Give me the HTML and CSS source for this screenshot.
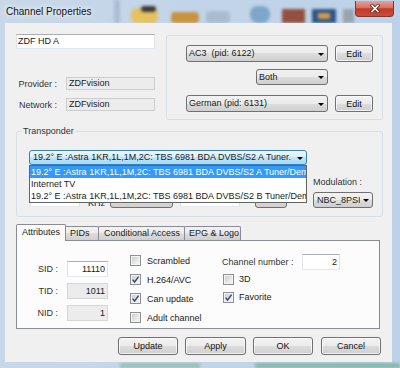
FILE: index.html
```html
<!DOCTYPE html>
<html>
<head>
<meta charset="utf-8">
<link rel="stylesheet" href="styles.css">
</head>
<body>
<div class="window">
  <div class="desk">
    <div class="blob b-band"></div>
    <div class="blob b-yel"></div>
    <div class="blob b-hat"></div>
    <div class="blob b-org"></div>
    <div class="blob b-lb"></div>
    <div class="blob b-blue"></div>
    <div class="blob b-brown"></div>
    <div class="blob b-navy"></div>
    <div class="blob b-navy2"></div>
    <div class="blob b-gray"></div>
    <div class="blob b-g1"></div>
    <div class="blob b-g2"></div>
  </div>
  <div class="titlebar">
    <span class="title">Channel Properties</span>
    <div class="close">
      <svg width="10" height="9" viewBox="0 0 10 9"><path d="M2 1.5 L8 7.5 M8 1.5 L2 7.5" stroke="#5a2a26" stroke-width="3.2" stroke-linecap="square"/><path d="M2 1.5 L8 7.5 M8 1.5 L2 7.5" stroke="#fff" stroke-width="1.6" stroke-linecap="square"/></svg>
    </div>
  </div>
  <div class="client">
    <div class="top">
      <div class="leftcol">
        <div class="tb name">ZDF HD A</div>
        <div class="inforow first"><span class="lbl">Provider :</span><div class="ro">ZDFvision</div></div>
        <div class="inforow"><span class="lbl">Network :</span><div class="ro">ZDFvision</div></div>
      </div>
      <div class="group audio">
        <div class="arow"><div class="combo wide"><span class="ctext">AC3&nbsp; (pid: 6122)</span><span class="arr"></span></div><div class="btn edit">Edit</div></div>
        <div class="arow r2"><div class="combo both"><span class="ctext">Both</span><span class="arr"></span></div></div>
        <div class="arow r3"><div class="combo wide"><span class="ctext">German (pid: 6131)</span><span class="arr"></span></div><div class="btn edit">Edit</div></div>
      </div>
    </div>
    <div class="group transp">
      <span class="legend">Transponder</span>
      <div class="tcombo-wrap">
        <div class="combo focus"><span class="ctext">19.2° E :Astra 1KR,1L,1M,2C: TBS 6981 BDA DVBS/S2 A Tuner.</span><span class="arr"></span></div>
        <div class="droplist">
          <div class="item sel">19.2° E :Astra 1KR,1L,1M,2C: TBS 6981 BDA DVBS/S2 A Tuner/Demod</div>
          <div class="item">Internet TV</div>
          <div class="item">19.2° E :Astra 1KR,1L,1M,2C: TBS 6981 BDA DVBS/S2 B Tuner/Demod</div>
        </div>
      </div>
      <div class="trow">
        <div class="tb freq"></div>
        <span class="khz">KHz</span>
        <div class="combo pol"><span class="ctext"></span><span class="arr"></span></div>
        <div class="tb sr"></div>
        <div class="combo fec"><span class="ctext"></span><span class="arr"></span></div>
        <div class="modcol">
          <span class="modlbl">Modulation :</span>
          <div class="combo mod"><span class="ctext">NBC_8PSI</span><span class="arr"></span></div>
        </div>
      </div>
    </div>
    <div class="tabs">
      <div class="tab sel t1">Attributes</div>
      <div class="tab t2">PIDs</div>
      <div class="tab t3">Conditional Access</div>
      <div class="tab t4">EPG &amp; Logo</div>
    </div>
    <div class="panel">
      <div class="col1">
        <div class="idrow"><span class="idlbl">SID :</span><div class="tb num">11110</div></div>
        <div class="idrow"><span class="idlbl">TID :</span><div class="tb num dis">1011</div></div>
        <div class="idrow"><span class="idlbl">NID :</span><div class="tb num dis">1</div></div>
      </div>
      <div class="col2">
        <div class="chk"><span class="cb"></span><span>Scrambled</span></div>
        <div class="chk"><span class="cb"><svg width="9" height="9" viewBox="0 0 9 9"><path d="M1.6 4.6 L3.6 7 L7.6 1.6" fill="none" stroke="#34497e" stroke-width="1.4"/></svg></span><span>H.264/AVC</span></div>
        <div class="chk"><span class="cb"><svg width="9" height="9" viewBox="0 0 9 9"><path d="M1.6 4.6 L3.6 7 L7.6 1.6" fill="none" stroke="#34497e" stroke-width="1.4"/></svg></span><span>Can update</span></div>
        <div class="chk"><span class="cb"></span><span>Adult channel</span></div>
      </div>
      <div class="col3">
        <div class="chrow"><span class="chlbl">Channel number :</span><div class="tb num chnum">2</div></div>
        <div class="chk c3"><span class="cb"></span><span>3D</span></div>
        <div class="chk c3"><span class="cb"><svg width="9" height="9" viewBox="0 0 9 9"><path d="M1.6 4.6 L3.6 7 L7.6 1.6" fill="none" stroke="#34497e" stroke-width="1.4"/></svg></span><span>Favorite</span></div>
      </div>
    </div>
    <div class="buttons">
      <div class="btn b-upd">Update</div>
      <div class="btn b-apply">Apply</div>
      <div class="btn b-ok">OK</div>
      <div class="btn b-cancel">Cancel</div>
    </div>
  </div>
</div>
</body>
</html>
```
FILE: styles.css
```css
* { box-sizing: border-box; }
html, body { margin: 0; padding: 0; }
body {
  width: 400px; height: 368px; overflow: hidden;
  font-family: "Liberation Sans", Arial, sans-serif;
  font-size: 9px; color: #1a1a1a;
}
.window {
  position: relative;
  width: 400px; height: 368px;
  background: linear-gradient(90deg, #c9d8e8 0%, #c3d5e8 40%, #bdd2e8 100%);
  padding: 0 8px 6px 5px;
  display: flex; flex-direction: column;
  overflow: hidden;
}
.desk { position: absolute; left: 0; top: 0; width: 400px; height: 368px; }
.blob { position: absolute; filter: blur(1.5px); }
.b-band { left: 114px; top: 0; width: 6px; height: 23px; background: #a9bed3; }
.b-yel { left: 131px; top: 8px; width: 27px; height: 15px; background: #e6c25e; border-radius: 6px; }
.b-hat { left: 141px; top: 6px; width: 15px; height: 6px; background: #3a3a3a; border-radius: 3px; }
.b-org { left: 171px; top: 12px; width: 28px; height: 11px; background: #c8923f; border-radius: 4px; }
.b-lb { left: 206px; top: 11px; width: 24px; height: 12px; background: #a9bccf; border-radius: 4px; }
.b-blue { left: 250px; top: 6px; width: 20px; height: 17px; background: #7ea6c9; border-radius: 8px; }
.b-brown { left: 282px; top: 9px; width: 23px; height: 14px; background: #934f40; }
.b-navy { left: 312px; top: 9px; width: 24px; height: 14px; background: #2c5686; }
.b-navy2 { left: 318px; top: 13px; width: 12px; height: 6px; background: #d79a4a; }
.b-gray { left: 343px; top: 9px; width: 11px; height: 14px; background: #98a4ae; }
.b-g1 { left: 120px; top: 363px; width: 80px; height: 5px; background: #7fb49c; opacity: .6; }
.b-g2 { left: 255px; top: 363px; width: 145px; height: 5px; background: #62a482; opacity: .6; }

.titlebar { position: relative; height: 23px; display: flex; align-items: flex-start; }
.title {
  font-family: "Liberation Sans", Arial, sans-serif;
  font-size: 10px; line-height: 12px;
  margin: 6px 0 0 1px; color: #111;
  text-shadow: 0 0 4px #fff, 0 0 7px rgba(255,255,255,.9);
}
.close {
  margin-left: auto; margin-right: -2px; margin-top: 1px;
  width: 39px; height: 16px;
  border: 1px solid #7a3a33; border-top: none;
  border-radius: 0 0 4px 4px;
  background: linear-gradient(#e4a39a 0%, #d6705f 45%, #c23b2b 52%, #cf4a36 100%);
  display: flex; align-items: center; justify-content: center;
}

.client {
  position: relative;
  width: 387px; height: 339px;
  background: #f0f0f0;
  padding-left: 11px;
}

.tb {
  border: 1px solid;
  border-color: #abadb3 #e2e3ea #e3e9ef #e2e3ea;
  background: #fff;
  padding: 0 2px;
  white-space: nowrap; overflow: hidden;
}

.top { display: flex; align-items: flex-start; }
.leftcol { width: 139px; margin-top: 11px; }
.name { height: 15px; line-height: 13px; padding-left: 1px; }
.inforow { display: flex; align-items: center; height: 13px; margin-top: 8px; }
.inforow.first { margin-top: 28px; }
.lbl { width: 41px; text-align: right; margin-right: 9px; color: #333; white-space: nowrap; }
.ro {
  width: 89px; height: 13px; line-height: 11px;
  background: #ececec; border: 1px solid #cdcdcd;
  padding: 0 2px; white-space: nowrap;
}

.group { border: 1px solid #d5dfe5; border-radius: 3px; }
.audio { width: 217px; height: 85px; margin: 12px 0 0 11px; padding: 9px 0 0 19px; }
.arow { display: flex; align-items: center; height: 17px; }
.arow.r2 { margin-top: 7px; height: 16px; }
.arow.r3 { margin-top: 10px; }

.combo {
  display: flex; align-items: center;
  height: 17px;
  border: 1px solid #707070; border-radius: 3px;
  background: linear-gradient(#f2f2f2, #ebebeb 50%, #dddddd 50%, #cfcfcf);
  padding: 0 0 0 2px;
  white-space: nowrap; overflow: hidden;
}
.ctext { flex: 1; overflow: hidden; white-space: nowrap; line-height: 13px; }
.arr {
  flex: none; width: 0; height: 0;
  margin: 1px 3px 0 3px;
  border-left: 3px solid transparent; border-right: 3px solid transparent;
  border-top: 3px solid #000;
}
.combo.wide { width: 142px; }
.combo.both { width: 72px; height: 16px; margin-left: 70px; }

.btn {
  display: flex; align-items: center; justify-content: center;
  height: 18px;
  border: 1px solid #707070; border-radius: 3px;
  background: linear-gradient(#f2f2f2, #ebebeb 50%, #dddddd 50%, #cfcfcf);
  box-shadow: inset 0 0 0 1px rgba(255,255,255,.7);
  color: #111;
}
.btn.edit { width: 38px; height: 17px; margin-left: 7px; }

.transp { width: 367px; height: 86px; margin-top: 11px; padding-left: 12px; }
.legend {
  display: block; width: fit-content;
  margin: -6px 0 0 -7px; padding: 0 1px;
  height: 10px; line-height: 10px;
  background: #f0f0f0; color: #333;
}
.tcombo-wrap { position: relative; width: 278px; height: 15px; margin-top: 14px; }
.combo.focus {
  width: 278px; height: 15px;
  border-color: #3c7fb1;
  background: linear-gradient(#eaf6fd, #d9f0fc 50%, #bee6fd 50%, #a7d9f5);
  padding-left: 3px;
}
.droplist {
  position: absolute; left: 0; top: 15px; z-index: 3;
  width: 278px;
  border: 1px solid #646464;
  background: #fff;
}
.item { height: 12px; line-height: 12px; padding-left: 1px; white-space: nowrap; overflow: hidden; }
.item.sel { background: #3399ff; color: #fff; }

.trow { display: flex; align-items: flex-end; height: 31px; margin-top: 12px; }
.tb.freq { width: 50px; height: 15px; margin: 0 0 1px 1px; }
.khz { margin: 0 0 0 8px; line-height: 10px; }
.combo.pol { width: 63px; height: 16px; margin-left: 5px; }
.tb.sr { width: 60px; height: 15px; margin: 0 0 1px 7px; }
.combo.fec { width: 32px; height: 16px; margin-left: 15px; }
.modcol { display: flex; flex-direction: column; margin-left: 26px; }
.modlbl { line-height: 10px; margin-bottom: 5px; color: #333; }
.combo.mod { width: 60px; height: 16px; padding-left: 3px; }

.tabs { display: flex; align-items: flex-end; height: 16px; margin-top: 7px; position: relative; z-index: 1; }
.tab {
  height: 14px; line-height: 13px;
  border: 1px solid #898c95; border-bottom: none;
  border-radius: 2px 2px 0 0;
  background: linear-gradient(#f2f2f2, #ebebeb 50%, #dddddd 50%, #cfcfcf);
  padding-left: 4px; margin-left: -1px;
  white-space: nowrap;
}
.tab.sel {
  position: relative; z-index: 2;
  height: 17px; line-height: 15px; margin-bottom: -1px; margin-left: 0;
  background: #fcfcfc; padding-left: 5px;
}
.t1 { width: 50px; }
.t2 { width: 34px; }
.t3 { width: 87px; padding-left: 5px; }
.t4 { width: 57px; }

.panel {
  width: 364px; height: 89px;
  border: 1px solid #898c95;
  background: #fcfcfc;
  display: flex;
}
.col1 { width: 91px; padding-top: 20px; }
.idrow { display: flex; align-items: center; height: 16px; margin-bottom: 6px; }
.idlbl { width: 41px; text-align: right; margin-right: 9px; color: #333; }
.tb.num { width: 41px; height: 16px; line-height: 14px; text-align: right; padding-right: 2px; }
.tb.dis { background: #ececec; border-color: #d6d6d6; }
.col2 { width: 92px; margin-left: 22px; padding-top: 10px; }
.chk { display: flex; align-items: center; height: 19px; white-space: nowrap; }
.cb {
  flex: none;
  width: 11px; height: 11px; margin-right: 6px;
  border: 1px solid #8e8f8f;
  background: linear-gradient(135deg, #c4c8cd, #efefef 75%);
  box-shadow: inset 0 0 0 1px #f4f4f4;
  display: flex; align-items: center; justify-content: center;
}
.col3 { padding-top: 13px; }
.chrow { display: flex; align-items: center; height: 16px; }
.chlbl { width: 80px; color: #333; white-space: nowrap; }
.tb.chnum { width: 38px; padding-right: 2px; }
.chk.c3 { height: 18px; padding-left: 1px; }
.chk.c3 .cb { margin-right: 5px; }

.buttons { display: flex; justify-content: flex-end; padding-right: 11px; margin-top: 8px; }
.b-upd { width: 60px; }
.b-apply { width: 61px; margin-left: 7px; }
.b-ok { width: 60px; margin-left: 7px; }
.b-cancel { width: 60px; margin-left: 8px; }
```
